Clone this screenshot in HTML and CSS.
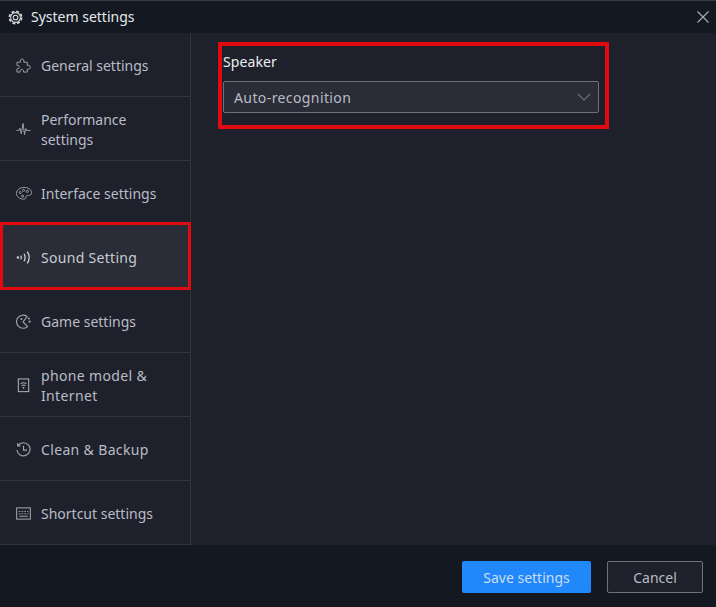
FILE: index.html
```html
<!DOCTYPE html>
<html lang="en">
<head>
<meta charset="utf-8">
<title>System settings</title>
<link rel="stylesheet" href="styles.css">
</head>
<body>
<div class="window">
  <header class="titlebar">
    <svg class="title-icon" viewBox="0 0 16 16" fill="none" stroke="currentColor"><circle cx="8" cy="8" r="2.500" stroke-width="1.100"/><circle cx="8" cy="8" r="5.200" stroke-width="1.100"/><circle cx="8" cy="8" r="6.500" stroke-width="1.800" stroke-dasharray="3.100 2.000"/></svg>
    <span class="title-text">System settings</span>
    <svg class="close-icon" viewBox="0 0 12 12" fill="none" stroke="currentColor" stroke-width="1.100"><path d="M.5.5l11 11M11.500.5l-11 11"/></svg>
  </header>
  <div class="body">
    <nav class="sidebar">
      <a class="nav-item">
        <svg class="nav-icon" viewBox="0 0 16 16" fill="none" stroke="currentColor"><path d="M1 4.500h3.700C4.200 2.500 5 1 6.500 1S8.800 2.500 8.300 4.500H12V8c1.700-.5 3.300.2 3.300 1.800S13.700 12.300 12 11.800V15H8c.4-1.600-.4-2.800-1.800-2.800S4 13.400 4.400 15H1v-3.500c1.300.4 2.500-.3 2.500-1.700S2.300 7.600 1 8z"/></svg>
        <span>General settings</span>
      </a>
      <a class="nav-item">
        <svg class="nav-icon" viewBox="0 0 16 16" fill="none" stroke="currentColor"><path d="M.5 9h2.500l1.200-2.500 1.400 6L7.500 1.500l1.600 12 1.400-6.500 1 2h4"/></svg>
        <span>Performance settings</span>
      </a>
      <a class="nav-item">
        <svg class="nav-icon icon-wide" viewBox="0 0 17 15" fill="none" stroke="currentColor"><path d="M8.500 1c4.300 0 8 2.300 8 5.600 0 2.100-1.600 3.200-3.300 3-1.700-.2-2.600.4-2.600 1.600 0 1.300-1 2.300-2.500 2.300C4 13.500.5 11 .5 7.300.5 3.800 4.200 1 8.500 1z"/><circle cx="4.500" cy="6.500" r="1.100"/><circle cx="8" cy="4.200" r="1.100"/><circle cx="12" cy="5.300" r="1.100"/><circle cx="7" cy="10.300" r="1.100"/></svg>
        <span>Interface settings</span>
      </a>
      <a class="nav-item active">
        <svg class="nav-icon" viewBox="0 0 16 16" fill="none" stroke="currentColor" stroke-width="1.300"><circle cx="2" cy="8" r=".6"/><path d="M5 6c.8 1.300.8 2.700 0 4M8.500 4c1.600 2.600 1.600 5.400 0 8M12 1.800c2.500 3.800 2.500 8.600 0 12.400"/></svg>
        <span>Sound Setting</span>
      </a>
      <a class="nav-item">
        <svg class="nav-icon" viewBox="0 0 16 16" fill="none" stroke="currentColor" stroke-width="1.200"><path d="M11.800 2.700A7 7 0 1 0 12.300 13.400L7.500 8.500z"/><circle cx="14.500" cy="8" r=".6"/><circle cx="13.700" cy="4.800" r=".5"/><circle cx="5.800" cy="5.300" r=".5"/></svg>
        <span>Game settings</span>
      </a>
      <a class="nav-item spaced">
        <svg class="nav-icon" viewBox="0 0 16 16" fill="none" stroke="currentColor" stroke-width="1.200"><rect x="2.500" y="1" width="11" height="13.500"/><path d="M4.800 6.300c2-1.500 4.400-1.500 6.400 0M6 8.200c1.300-.9 2.700-.9 4 0M7.200 10l.8.800.8-.8"/></svg>
        <span>phone model &amp; Internet</span>
      </a>
      <a class="nav-item spaced">
        <svg class="nav-icon" viewBox="0 0 16 16" fill="none" stroke="currentColor" stroke-width="1.200"><path d="M2.200 3.800A7 7 0 1 1 1 8.500M1.800 1v3.200H5M8 4v4.600h3.800"/></svg>
        <span>Clean &amp; Backup</span>
      </a>
      <a class="nav-item">
        <svg class="nav-icon" viewBox="0 0 16 16" fill="none" stroke="currentColor" stroke-width="1.100"><rect x=".7" y="2" width="14.600" height="12"/><path d="M3 5.800h1.600M6 5.800h1.600M9 5.800h1.600M12 5.800h1.200M3 8.300h1.600M6 8.300h1.600M9 8.300h1.600M12 8.300h1.200M3.500 11h9"/></svg>
        <span>Shortcut settings</span>
      </a>
    </nav>
    <main class="content">
      <section class="field">
        <label class="field-label">Speaker</label>
        <div class="select">
          <span class="select-value">Auto-recognition</span>
          <svg class="chevron" viewBox="0 0 14 8" fill="none" stroke="currentColor" stroke-width="1.100"><path d="M1 1l6 6 6-6"/></svg>
        </div>
      </section>
    </main>
  </div>
  <footer class="footer">
    <button class="btn btn-primary">Save settings</button>
    <button class="btn btn-default">Cancel</button>
  </footer>
</div>
</body>
</html>
```
FILE: styles.css
```css
* { box-sizing: border-box; }
html, body { margin: 0; height: 100%; }
body {
  background: #1e212b;
  color: #b9bcc6;
  font-family: "Noto Sans", "Open Sans", sans-serif;
  font-size: 14px;
  overflow: hidden;
}
.window {
  width: 716px;
  height: 607px;
  display: flex;
  flex-direction: column;
}
.titlebar {
  height: 33px;
  flex: none;
  background: #141820;
  border-top: 1px solid #3a3d40;
  display: flex;
  align-items: center;
  padding: 0 7px 0 8px;
  color: #e6e8ec;
}
.title-icon { width: 15px; height: 15px; flex: none; color: #d8dade; }
.title-text { margin-left: 8px; line-height: 20px; }
.close-icon { width: 12px; height: 12px; margin-left: auto; color: #a9adb6; }
.body { flex: 1; display: flex; min-height: 0; }
.sidebar {
  width: 191px;
  flex: none;
  border-right: 1px solid #32353f;
  display: flex;
  flex-direction: column;
}
.nav-item {
  height: 64px;
  flex: none;
  display: flex;
  align-items: center;
  padding: 2px 30px 0 16px;
  border-bottom: 1px solid #32353f;
  line-height: 20px;
  color: #b9bcc6;
}
.nav-icon { width: 15px; height: 15px; flex: none; margin-right: 10px; color: #a2a5ae; }
.icon-wide { width: 16px; margin-right: 9px; }
.nav-item.spaced { letter-spacing: .35px; }
.nav-item.active {
  background: #2a2d37;
  color: #c8cbd3;
  border: 3px solid #e00a10;
  margin-top: -3px;
  height: 68px;
  padding: 3px 30px 0 13px;
  margin-bottom: -1px;
  margin-right: -1px;
  letter-spacing: .3px;
}
.nav-item.active .nav-icon { color: #d5d7dd; }
.content { flex: 1; padding: 9px 0 0 27px; }
.field {
  width: 391px;
  height: 87px;
  border: 4px solid #e00a10;
  padding: 6px 6px 0 1px;
}
.field-label { display: block; color: #eceef2; line-height: 20px; letter-spacing: .1px; }
.select {
  margin-top: 9px;
  height: 32px;
  border: 1px solid #6f727b;
  border-radius: 2px;
  background: #2a2d37;
  display: flex;
  align-items: center;
  justify-content: space-between;
  padding: 0 7px 0 10px;
  color: #b9bcc6;
}
.select-value { letter-spacing: .4px; }
.chevron { width: 14px; height: 8px; color: #6f727b; }
.footer {
  height: 62px;
  flex: none;
  background: #141820;
  display: flex;
  align-items: flex-start;
  justify-content: flex-end;
  gap: 16px;
  padding: 16px 13px 0 0;
}
.btn {
  height: 32px;
  border-radius: 2px;
  font: inherit;
  padding: 0;
}
.btn-primary {
  width: 129px;
  border: none;
  background: #2188fb;
  color: #c9dcf2;
}
.btn-default {
  width: 96px;
  border: 1px solid #6f727b;
  background: #1e212b;
  color: #b9bcc6;
}
```
